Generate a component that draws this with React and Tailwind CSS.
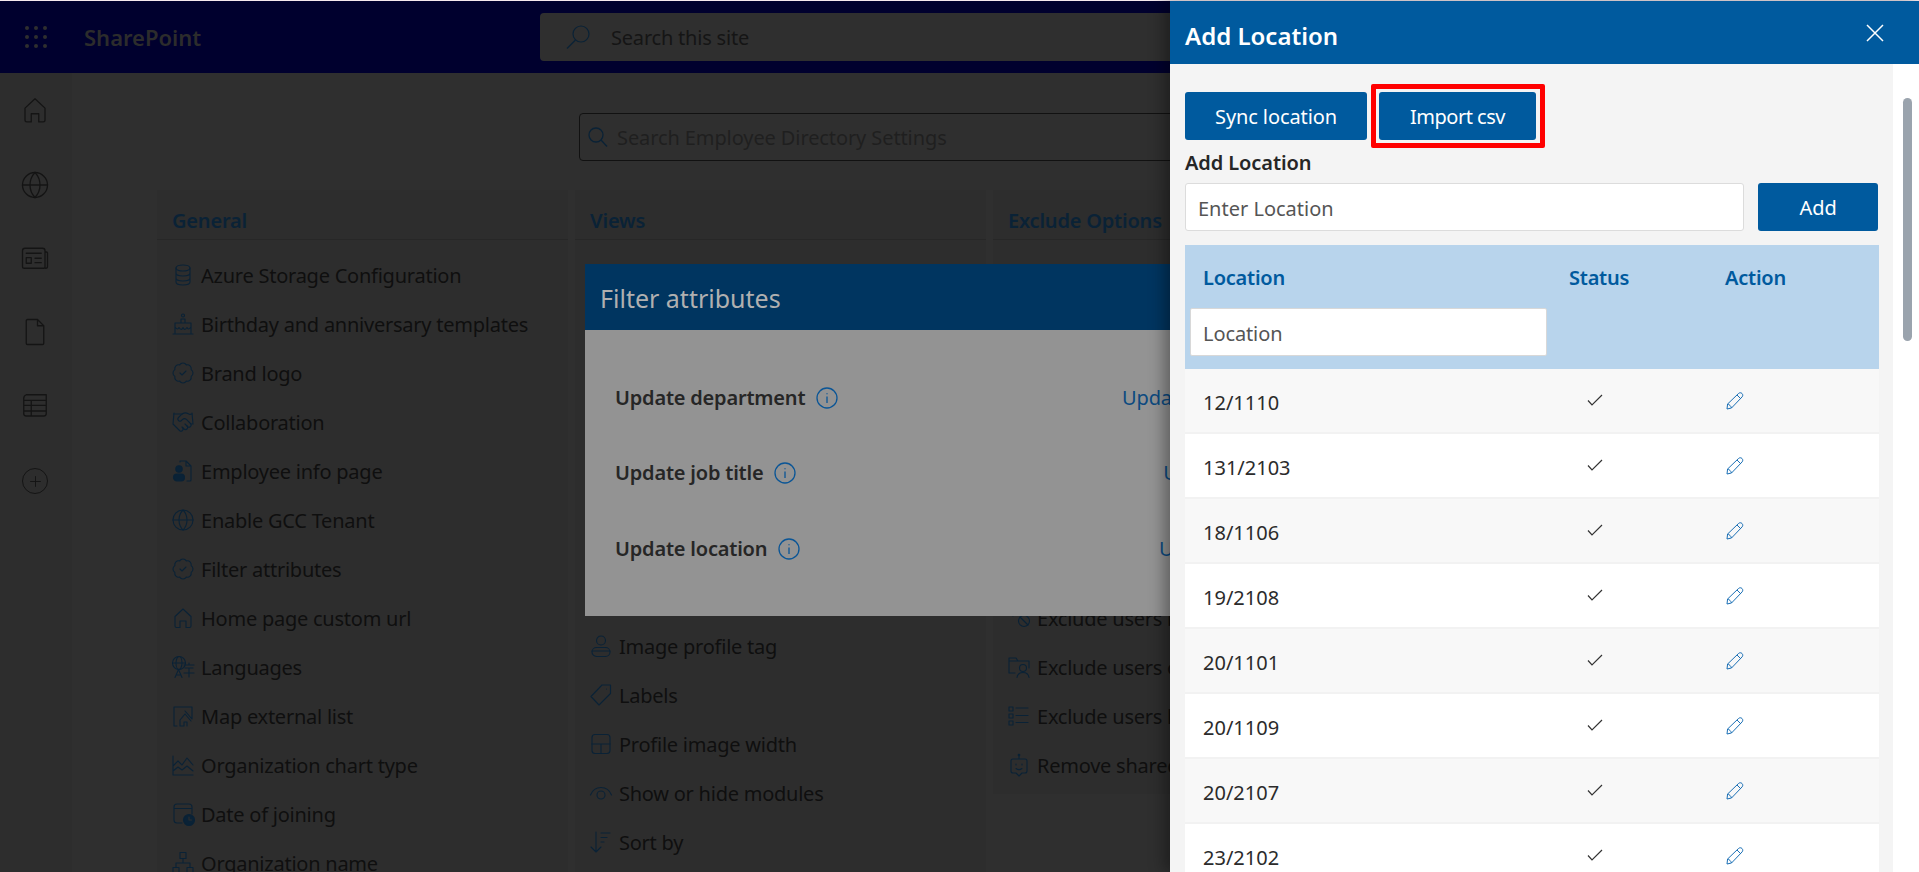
import React from "react";
import { BadgeCheck, Handshake, Globe, Plus } from "lucide-react";

const S = ({ children, className = "w-[24px] h-[24px]", sw = 1.1 }) => (
  <svg viewBox="0 0 24 24" fill="none" stroke="currentColor" strokeWidth={sw} strokeLinecap="round" strokeLinejoin="round" className={className}>
    {children}
  </svg>
);

const Db = () => <S><ellipse cx="12" cy="5" rx="7" ry="3" /><path d="M5 5v14c0 1.7 3 3 7 3s7-1.3 7-3V5M5 10c0 1.7 3 3 7 3s7-1.3 7-3M5 15c0 1.7 3 3 7 3s7-1.3 7-3" /></S>;
const Cake = () => <S><circle cx="12" cy="3.500" r="1.500" /><path d="M10 11V7h4v4M4 21V11h16v10M2 22h20M4 15c2 2.500 3 2.500 4 .5 1.500 2.500 3 2.500 4 0 1 2.500 2.500 2.500 4 0 1 2 2 2 4-.5" /></S>;
const Badge = () => <BadgeCheck className="w-[24px] h-[24px]" strokeWidth={1.1} />;
const Shake = () => <Handshake className="w-[24px] h-[24px]" strokeWidth={1.1} />;
const Emp = () => <S><path d="M9 3V2h6l5 5v14a1 1 0 0 1-1 1h-3M15 2v5h5" /><circle cx="8" cy="10" r="3.200" fill="currentColor" /><rect x="2.500" y="15" width="11" height="7" rx="3.500" fill="currentColor" /></S>;
const Glb = () => <Globe className="w-[24px] h-[24px]" strokeWidth={1.1} />;
const Home = ({ className, sw }) => <S className={className} sw={sw}><path d="M4 10.500 12 3l8 7.500V20a1.500 1.500 0 0 1-1.500 1.500H15V15H9v6.500H5.500A1.500 1.500 0 0 1 4 20z" /></S>;
const Lang = () => <S><circle cx="8" cy="8" r="6.500" /><ellipse cx="8" cy="8" rx="3" ry="6.500" /><path d="M1.500 8h13M4 22.500l3.500-8 3.500 8M5 20h5M13 10h10M18 8v2M14 13h8M13 18h10M18 13v9" /></S>;
const MapI = () => <S><path d="M3 22V3h18v12M3 22h3M9 22v-6l5-6 6 7M9 22h4v-4h3v4M14 7l7 8" /></S>;
const Chart = () => <S><path d="M2 3v19h20M2 13l5-5 4 4 5-7 6 7M2 18l5-4 4 3 5-4 6 5" /></S>;
const Dt = () => <S><path d="M11 21H6a3 3 0 0 1-3-3V5a3 3 0 0 1 3-3h12a3 3 0 0 1 3 3v7M3 6.500h18" /><circle cx="18" cy="18" r="5.500" fill="currentColor" /><path d="M18 15v3h2.500" stroke="#2e2e2e" /></S>;
const Org = () => <S><rect x="9" y="1.500" width="6" height="6" /><rect x="2" y="16.500" width="6" height="6" /><rect x="16" y="16.500" width="6" height="6" /><path d="M12 7.500V12M5 16.500V12h14v4.500" /></S>;
const Prof = () => <S><circle cx="12" cy="6.500" r="4.500" /><rect x="3" y="13.500" width="18" height="9" rx="4.500" /><path d="M3 17h18" /></S>;
const Tag = () => <S><path d="M13 2h8.500v8.500L10 22 2 13.500zM17.500 6h.01" /></S>;
const Lay = () => <S><rect x="3" y="2.500" width="18" height="19" rx="3" /><path d="M3 12h18M12 12v9.500" /></S>;
const Eye = () => <S><path d="M1.500 14C3.500 9 7.500 6.500 12 6.500S20.500 9 22.500 14" /><circle cx="12" cy="14" r="4" /></S>;
const Sort = () => <S><path d="M7 2v20M2 17l5 5 5-5M12 3h9M12 7.500h6M12 12h3" /></S>;
const Ban = () => <S><path d="M2 3c1 3 2 5 4 7M6 2c1 2 2 4 4 5" /><circle cx="17" cy="15" r="5.500" /><path d="m13 11 8 8" /></S>;
const Fold = () => <S><path d="M8 18H2V3h7l2 3h11v7M2 6h9" /><circle cx="16" cy="13" r="3.500" /><path d="M10 22.500c.5-3 3-5 6-5s5.500 2 6 5" /></S>;
const Lst = () => <S><rect x="2" y="3" width="4" height="4" /><rect x="2" y="10" width="4" height="4" /><rect x="2" y="17" width="4" height="4" /><path d="M9 4h12M9 11.500h12M9 18.500h12" /></S>;
const Bot = () => <S><path d="M12 1.500v4" /><circle cx="12" cy="2" r=".8" /><path d="M6 6h12a2 2 0 0 1 2 2v10a2 2 0 0 1-2 2h-3l-3 3-3-3H6a2 2 0 0 1-2-2V8a2 2 0 0 1 2-2z" /><path d="M9 11v1M15 11v1M9 15.500c2 1.500 4 1.500 6 0" /></S>;

const general = [
  ["Azure Storage Configuration", Db], ["Birthday and anniversary templates", Cake], ["Brand logo", Badge],
  ["Collaboration", Shake], ["Employee info page", Emp], ["Enable GCC Tenant", Glb], ["Filter attributes", Badge],
  ["Home page custom url", Home], ["Languages", Lang], ["Map external list", MapI], ["Organization chart type", Chart],
  ["Date of joining", Dt], ["Organization name", Org],
];
const views = [["Image profile tag", Prof], ["Labels", Tag], ["Profile image width", Lay], ["Show or hide modules", Eye], ["Sort by", Sort]];
const exclude = [["Exclude users by", Ban], ["Exclude users of", Fold], ["Exclude users list", Lst], ["Remove shared", Bot]];
const rows = ["12/1110", "131/2103", "18/1106", "19/2108", "20/1101", "20/1109", "20/2107", "23/2102"];

function Card({ title, items, listClass, cardClass }) {
  return (
    <section className={`w-[411px] shrink-0 bg-[#2d2d2d] ${cardClass}`}>
      <h2 className="h-[50px] pl-[15px] pt-[19px] border-b border-[#272727] text-[20px] leading-[24px] font-semibold text-[#0a2236] tracking-[-0.01em]">{title}</h2>
      <ul className={listClass}>
        {items.map(([t, I]) => (
          <li key={t} className="h-[49px] flex items-center pl-[14px] text-[#0f0f0f] text-[20px] tracking-[-0.012em] whitespace-nowrap">
            <span className="w-[30px] shrink-0 text-[#0a2236]"><I /></span>
            <span className="pt-[2px]">{t}</span>
          </li>
        ))}
      </ul>
    </section>
  );
}

function Info() {
  return (
    <svg viewBox="0 0 22 22" className="w-[22px] h-[22px] ml-[11px] text-[#0a5596]" fill="none" stroke="currentColor" strokeWidth="1.300">
      <circle cx="11" cy="11" r="10" />
      <path d="M11 9.500V16M11 6.200v1" />
    </svg>
  );
}

function FilterRow({ label, link }) {
  return (
    <div className="h-[75.5px] flex items-center justify-between">
      <span className="flex items-center font-semibold text-[20px] text-[#262626] tracking-[-0.01em]">{label}<Info /></span>
      <span className="text-[20px] text-[#0c4a80] tracking-[-0.01em]">{link}</span>
    </div>
  );
}

const SideSlot = ({ className, children }) => <div className={`w-[30px] h-[30px] flex items-center justify-center ${className}`}>{children}</div>;

export default function App() {
  return (
    <div className="relative w-[1919px] h-[872px] overflow-hidden bg-[#2f2f2f] font-['Noto_Sans',sans-serif]">
      <div className="h-px bg-[#f6e9ee]" />
      <header className="h-[72px] bg-[#00002e] flex items-center">
        <svg viewBox="0 0 22 22" className="w-[22px] h-[22px] ml-[25px] text-[#2f2f2f]" fill="currentColor">
          {[2, 11, 20].map((y) => [2, 11, 20].map((x) => <circle key={`${x}-${y}`} cx={x} cy={y} r="2" />))}
        </svg>
        <span className="ml-[37px] w-[456px] pt-[1px] text-[22px] font-semibold text-[#2c2c2c]">SharePoint</span>
        <div className="w-[800px] h-[48px] rounded-[4px] bg-[#2f2f2f] flex items-center pl-[26px]">
          <svg viewBox="0 0 24 24" className="w-[24px] h-[24px] text-[#0a2236]" fill="none" stroke="currentColor" strokeWidth="1.200">
            <circle cx="15" cy="9" r="8" />
            <path d="M9.500 15 1 23.500" />
          </svg>
          <span className="ml-[21px] pt-[1px] text-[20px] text-[#151515] tracking-[-0.01em]">Search this site</span>
        </div>
      </header>
      <div className="flex">
        <aside className="w-[72px] h-[799px] shrink-0 pr-[2px] bg-[#2d2d2d] flex flex-col items-center text-[#141414]">
          <SideSlot className="mt-[22px]"><Home className="w-[30px] h-[30px]" sw={1.05} /></SideSlot>
          <SideSlot className="mt-[45px]"><Globe className="w-[30px] h-[30px]" strokeWidth={1.05} /></SideSlot>
          <SideSlot className="mt-[42px]">
            <S className="w-[30px] h-[30px]" sw={1.05}><path d="M4 5h14a2 2 0 0 1 2 2v13a1 1 0 0 1-1 1H3.500A1.500 1.500 0 0 1 2 19.500V7a2 2 0 0 1 2-2zM20 8h1.200a.8.8 0 0 1 .8.8V19.500a1.500 1.500 0 0 1-1.500 1.500M5 9h12M5 12.500h4v4.500H5zM12 13h5M12 16.500h5" /></S>
          </SideSlot>
          <SideSlot className="mt-[45px]">
            <S className="w-[30px] h-[30px]" sw={1.05}><path d="M6 2h8l5 5v14a1 1 0 0 1-1 1H6a1 1 0 0 1-1-1V3a1 1 0 0 1 1-1zM14 2v5h5" /></S>
          </SideSlot>
          <SideSlot className="mt-[44px]">
            <S className="w-[30px] h-[30px]" sw={1.05}><path d="M5 3h16v15a2 2 0 0 1-2 2H5a2 2 0 0 1-2-2V6a3 3 0 0 1 2-3zM3 7.500h18M3 11.500h18M3 16h18M9 7.500V20" /></S>
          </SideSlot>
          <SideSlot className="mt-[45px]">
            <div className="flex items-center justify-center w-[26px] h-[26px] rounded-full border-[1.5px] border-[#141414]">
              <Plus className="w-[17px] h-[17px]" strokeWidth={1.3} />
            </div>
          </SideSlot>
        </aside>
        <main className="flex-1 pl-[85px] pt-[40px]">
          <div className="ml-[422px] w-[800px] h-[48px] rounded-[4px] border border-[#111] flex items-center pl-[8px]">
            <svg viewBox="0 0 20 20" className="w-[20px] h-[20px] text-[#0a2236]" fill="none" stroke="currentColor" strokeWidth="1.300">
              <circle cx="8" cy="8" r="7" />
              <path d="m13 13 6 6.500" />
            </svg>
            <span className="ml-[9px] pt-[2px] text-[20px] text-[#1f1f1f] tracking-[-0.005em]">Search Employee Directory Settings</span>
          </div>
          <div className="mt-[29px] flex gap-[7px] items-start">
            <Card title="General" items={general} listClass="pt-[10px]" cardClass="h-[800px]" />
            <Card title="Views" items={views} listClass="pt-[381px]" cardClass="h-[800px]" />
            <Card title="Exclude Options" items={exclude} listClass="pt-[353px]" cardClass="h-[604px]" />
          </div>
        </main>
      </div>

      <div className="absolute left-[585px] top-[264px] w-[755px] h-[352px] bg-[#939393]">
        <div className="h-[66px] bg-[#003560] flex items-center pl-[15px] pt-[3px] text-[25px] text-[#b0b0b0]">Filter attributes</div>
        <div className="pt-[30px] pl-[30px] pr-[35px]">
          <FilterRow label="Update department" link="Update department" />
          <FilterRow label="Update job title" link="Update job title" />
          <FilterRow label="Update location" link="Update location" />
        </div>
      </div>

      <aside className="absolute right-0 top-px w-[749px] h-[871px] flex flex-col shadow-[-6px_0_14px_rgba(0,0,0,0.35)]">
        <div className="h-[63px] shrink-0 bg-[#005a9e] flex items-center justify-between pl-[15px] pr-[35px]">
          <h1 className="pt-[7px] text-[24px] font-semibold text-white">Add Location</h1>
          <svg viewBox="0 0 18 18" className="w-[18px] h-[18px] text-white" fill="none" stroke="currentColor" strokeWidth="1.500"><path d="M1 1l16 16M17 1 1 17" /></svg>
        </div>
        <div className="flex-1 flex min-h-0 bg-white">
          <div className="w-[723px] bg-[#f4f4f4] px-[15px] pt-[28px]">
            <div className="flex">
              <button className="w-[182px] h-[48px] pt-[2px] rounded-[3px] bg-[#005a9e] text-white text-[20px] tracking-[-0.005em]">Sync location</button>
              <button className="relative ml-[12px] w-[157px] h-[48px] pt-[2px] rounded-[3px] bg-[#005a9e] text-white text-[20px] tracking-[-0.025em]">
                Import csv
                <span className="absolute -left-[8px] -right-[9px] -top-[8px] -bottom-[8px] border-[5px] border-[#ff0000] rounded-[2px]" />
              </button>
            </div>
            <label className="block h-[43px] pt-[10px] text-[20px] leading-[26px] font-semibold text-[#262626] tracking-[-0.005em]">Add Location</label>
            <div className="flex gap-[14px]">
              <input placeholder="Enter Location" className="w-[560px] h-[48px] pt-[2px] bg-white border border-[#dcdcdc] rounded-[3px] pl-[12px] text-[20px] placeholder:text-[#555] outline-none" />
              <button className="w-[120px] h-[48px] pt-[2px] rounded-[3px] bg-[#005a9e] text-white text-[20px]">Add</button>
            </div>
            <div className="mt-[14px] w-[694px]">
              <div className="h-[124px] bg-[#b8d4ec] grid grid-cols-[367px_156px_171px] font-semibold text-[20px] text-[#005a9e] tracking-[-0.012em]">
                <div className="pt-[20px]">
                  <div className="pl-[18px] leading-[26px]">Location</div>
                  <input placeholder="Location" className="block mt-[17px] ml-[5px] w-[357px] h-[48px] pt-[2px] bg-white rounded-[2px] border border-[#d8d8d8] pl-[12px] text-[20px] font-normal tracking-[-0.005em] placeholder:text-[#555] outline-none" />
                </div>
                <div className="pt-[20px] pl-[17px] leading-[26px]">Status</div>
                <div className="pt-[20px] pl-[17px] leading-[26px]">Action</div>
              </div>
              {rows.map((r, i) => (
                <div key={r} className={`h-[65px] grid grid-cols-[367px_156px_171px] items-center border-b-2 border-[#f2f2f2] ${i % 2 ? "bg-white" : "bg-[#f8f8f8]"}`}>
                  <div className="pl-[18px] pt-[5px] text-[20px] text-[#2b2b2b]">{r}</div>
                  <div className="pl-[35px]">
                    <svg viewBox="0 0 16 12" className="w-[16px] h-[12px] -mt-[1px] text-[#333]" fill="none" stroke="currentColor" strokeWidth="1.200"><path d="M1 6.500 5 11 15 1" /></svg>
                  </div>
                  <div className="pl-[18px]">
                    <svg viewBox="0 0 18 18" className="w-[18px] h-[18px] mt-[1px] text-[#1a6fb5]" fill="none" stroke="currentColor" strokeWidth="1" strokeLinejoin="round"><path d="M1 17l.6-5L12.500 1.500c1-1 2.500-1 3.500 0s1 2.500 0 3.500L5.500 16zM1.600 12c1.500.2 3.500 2.200 3.900 4M11 3l4 4" /></svg>
                  </div>
                </div>
              ))}
            </div>
          </div>
          <div className="w-[26px] pt-[34px] pl-[10px]">
            <div className="w-[9px] h-[243px] rounded-full bg-[#9aa3ad]" />
          </div>
        </div>
      </aside>
    </div>
  );
}
